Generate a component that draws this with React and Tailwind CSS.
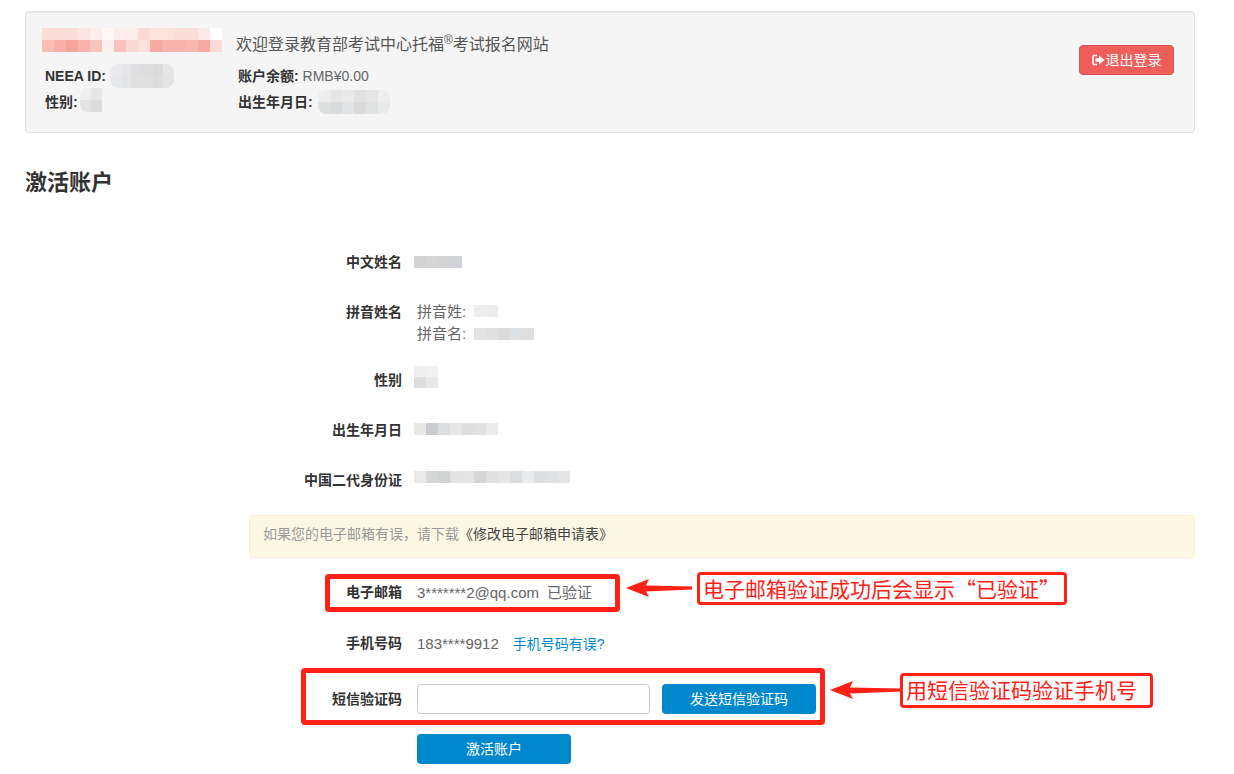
const FONT = "font-['Liberation_Sans','Noto_Sans_CJK_SC',sans-serif]";

const nameRows = [
  ["bg-[#fbdeda]", "bg-[#fbdcd8]", "bg-[#fbdcd8]", "bg-[#fce4e1]", "bg-[#fdeeec]", "bg-[#fff8f7]", "bg-[#fdecea]", "bg-[#fdecea]", "bg-[#fbdad6]", "bg-[#fce2df]", "bg-[#fce2df]", "bg-[#fbdeda]", "bg-[#fbdeda]", "bg-[#fce8e6]", "bg-[#fff]"],
  ["bg-[#f9bdb6]", "bg-[#f8b0a8]", "bg-[#f6a59c]", "bg-[#f8b4ac]", "bg-[#f9c4be]", "bg-[#fdf0ee]", "bg-[#f9c2bc]", "bg-[#fbd8d4]", "bg-[#fbe0dc]", "bg-[#f7aaa2]", "bg-[#f8b4ac]", "bg-[#f8b4ac]", "bg-[#f8b8b0]", "bg-[#f6aaa2]", "bg-[#fbdcd8]"],
];

function Mosaic({ rows, cell = "w-3 h-3", className = "" }) {
  return (
    <div className={`flex flex-col shrink-0 ${className}`}>
      {rows.map((row, i) => (
        <div key={i} className="flex">
          {row.map((color, j) => (
            <div key={j} className={`${cell} ${color}`} />
          ))}
        </div>
      ))}
    </div>
  );
}

function FormRow({ label, className = "", children }) {
  return (
    <div className={`flex ${className}`}>
      <div className="w-[153px] shrink-0 text-right font-bold text-[#333] text-sm leading-5">{label}</div>
      <div className="ml-[15px] text-[15px] leading-[22px] text-[#666]">{children}</div>
    </div>
  );
}

function SignOutIcon() {
  return (
    <svg width="13" height="12" viewBox="0 0 13 12" className="shrink-0">
      <path d="M5 1.5H2.2C1.5 1.5 1 2 1 2.7v6.6c0 .7.5 1.2 1.2 1.2H5" fill="none" stroke="#fff" strokeWidth="1.6" />
      <path d="M3.5 4.2H7V1.5L12.5 6 7 10.5V7.8H3.5z" fill="#fff" />
    </svg>
  );
}

export default function App() {
  return (
    <div className={`relative w-[1234px] h-[774px] overflow-hidden bg-white ${FONT}`}>
      <div className="pl-[25px] pt-[11px] w-[1195px]">
        <div className="flex justify-between h-[122px] rounded border border-[#e3e3e3] bg-[#f5f5f5] pl-4 pr-5 pt-4 shadow-[inset_0_1px_1px_rgba(0,0,0,0.05)]">
          <div>
            <div className="flex items-end h-6">
              <Mosaic rows={nameRows} className="w-[180px] -mt-1" />
              <div className="ml-[14px] text-base leading-6 text-[#555] translate-y-[5px]">
                欢迎登录教育部考试中心托福<sup className="text-[12px]">®</sup>考试报名网站
              </div>
            </div>
            <div className="flex mt-[11px] h-[26px] items-center pl-[3px] text-sm">
              <div className="flex items-center w-[193px]">
                <b className="text-[#333]">NEEA ID:</b>
                <Mosaic className="ml-1 rounded-lg overflow-hidden" rows={[
                  ["bg-[#e9ebee]", "bg-[#e6e6e8]", "bg-[#dedfe0]", "bg-[#dcdddc]", "bg-[#d9dada]", "bg-[#e4e5e4]"],
                  ["bg-[#e6e8ea]", "bg-[#e3e4e6]", "bg-[#e0e0e0]", "bg-[#dfe0df]", "bg-[#dcdedd]", "bg-[#e3e5e4]"],
                ]} cell="w-[10.7px] h-3" />
              </div>
              <div><b className="text-[#333]">账户余额:</b> <span className="text-[#666]">RMB¥0.00</span></div>
            </div>
            <div className="flex h-[26px] items-center pl-[3px] text-sm">
              <div className="flex items-center w-[193px]">
                <b className="text-[#333]">性别:</b>
                <Mosaic className="ml-[2px] -translate-y-[2px] rounded-l-lg overflow-hidden" rows={[
                  ["bg-[#eeeeee]", "bg-[#e6e6e6]"],
                  ["bg-[#e2e2e2]", "bg-[#dcdcdc]"],
                ]} cell="w-[11px] h-3" />
              </div>
              <div className="flex items-center">
                <b className="text-[#333]">出生年月日:</b>
                <Mosaic className="ml-[5px] rounded-lg overflow-hidden" rows={[
                  ["bg-[#eceded]", "bg-[#e6e6e6]", "bg-[#e9e9e9]", "bg-[#e1e1e1]", "bg-[#e5e5e5]", "bg-[#eeeeee]"],
                  ["bg-[#dedfdf]", "bg-[#d9dcdf]", "bg-[#e2e3e4]", "bg-[#dbdad8]", "bg-[#dfe2e3]", "bg-[#eaeaea]"],
                ]} />
              </div>
            </div>
          </div>
          <button className="flex items-center justify-center gap-px w-[95px] h-[30px] mt-[17px] rounded border border-[#d9534f] bg-[#ee5f5b] text-sm text-white">
            <SignOutIcon />
            退出登录
          </button>
        </div>

        <h1 className="mt-[36px] text-[22px] leading-7 font-bold text-[#333]">激活账户</h1>

        <div className="ml-[224px] mt-[55px]">
          <FormRow label="中文姓名">
            <Mosaic className="mt-[4px] -ml-[3px]" rows={[["bg-[#d3d3d3]", "bg-[#d6d6d6]", "bg-[#d6d4d2]", "bg-[#d0d4d8]"]]} />
          </FormRow>

          <FormRow label="拼音姓名" className="mt-[30px]">
            <div className="flex items-center h-[22px] -mt-px">
              拼音姓:
              <Mosaic className="ml-[8px] -translate-y-[1px]" rows={[["bg-[#eeeeee]", "bg-[#ededed]"]]} />
            </div>
            <div className="flex items-center h-[22px]">
              拼音名:
              <Mosaic className="ml-[8px]" rows={[["bg-[#e2e3e4]", "bg-[#e2e0de]", "bg-[#dcdbdb]", "bg-[#dde1e3]", "bg-[#e0dfde]"]]} />
            </div>
          </FormRow>

          <FormRow label="性别" className="mt-[25px]">
            <Mosaic className="-ml-[3px] -mt-[4px]" rows={[
              ["bg-[#efefef]", "bg-[#f1f1f1]"],
              ["bg-[#dedddd]", "bg-[#e8e8ea]"],
            ]} cell="w-3 h-[11px]" />
          </FormRow>

          <FormRow label="出生年月日" className="mt-[30px]">
            <Mosaic className="mt-[3px] -ml-[3px]" rows={[["bg-[#e9e8e6]", "bg-[#cbcccf]", "bg-[#dcdde0]", "bg-[#e6e6e6]", "bg-[#dfdfe0]", "bg-[#e1e1e0]", "bg-[#ebebeb]"]]} />
          </FormRow>

          <FormRow label="中国二代身份证" className="mt-[30px]">
            <Mosaic className="mt-[1px] -ml-[3px]" rows={[["bg-[#e9e9e9]", "bg-[#d5d6d8]", "bg-[#d2d4d3]", "bg-[#e4e2e2]", "bg-[#e2e4e6]", "bg-[#d8d6d4]", "bg-[#dee0e2]", "bg-[#e6e5e3]", "bg-[#dbdcdd]", "bg-[#eaebee]", "bg-[#dedfe0]", "bg-[#dfe1e2]", "bg-[#e5e5e5]"]]} />
          </FormRow>

          <div className="mt-[25px] h-[43px] rounded border border-[#fbeed5] bg-[#fcf8e3] pl-[13px] text-sm leading-[37px] text-[#999]">
            如果您的电子邮箱有误，请下载<span className="text-[#444]">《修改电子邮箱申请表》</span>
          </div>

          <FormRow label="电子邮箱" className="mt-[24px]">
            3*******2@qq.com<span className="ml-[8px]">已验证</span>
          </FormRow>

          <FormRow label="手机号码" className="mt-[29px]">
            183****9912<a className="ml-[14px] text-sm text-[#0088cc]" href="#">手机号码有误?</a>
          </FormRow>

          <div className="flex mt-[29px]">
            <div className="w-[153px] shrink-0 text-right font-bold text-[#333] text-sm leading-[30px]">短信验证码</div>
            <input className="ml-[15px] w-[233px] h-[30px] rounded border border-[#cccccc] bg-white" />
            <button className="ml-3 w-[154px] h-[30px] rounded bg-[#0088cc] text-sm text-white">发送短信验证码</button>
          </div>

          <button className="block ml-[168px] mt-[20px] w-[154px] h-[30px] rounded bg-[#0088cc] text-sm text-white">激活账户</button>
        </div>
      </div>

      {/* annotations drawn over the form */}
      <div className="absolute left-[325px] top-[574px] w-[295px] h-[38px] rounded border-[5px] border-[#ff2016]" />
      <div className="absolute left-[301px] top-[668px] w-[524px] h-[57px] rounded border-[5px] border-[#ff2016]" />
      <svg className="absolute left-[620px] top-[570px]" width="80" height="36" viewBox="0 0 80 36">
        <polygon points="6,18 29,9 26,15.5 72,16.5 72,19.5 26,21.5 29,27" fill="#ff2016" />
      </svg>
      <svg className="absolute left-[825px] top-[672px]" width="80" height="36" viewBox="0 0 80 36">
        <polygon points="5,18 28,9 25,15.5 76,16.5 76,19.5 25,21.5 28,27" fill="#ff2016" />
      </svg>
      <div className="absolute left-[697px] top-[572px] w-[370px] h-[33px] rounded-sm border-[3px] border-[#ff2016] bg-white pl-[3px] text-[21px] leading-[27px] text-[#ff2016] whitespace-nowrap">
        电子邮箱验证成功后会显示<span className="font-['Noto_Sans_CJK_SC',sans-serif]">“</span>已验证<span className="font-['Noto_Sans_CJK_SC',sans-serif]">”</span>
      </div>
      <div className="absolute left-[900px] top-[673px] w-[253px] h-[35px] rounded-sm border-[3px] border-[#ff2016] bg-white pl-[3px] text-[21px] leading-[29px] text-[#ff2016] whitespace-nowrap">
        用短信验证码验证手机号
      </div>
    </div>
  );
}
